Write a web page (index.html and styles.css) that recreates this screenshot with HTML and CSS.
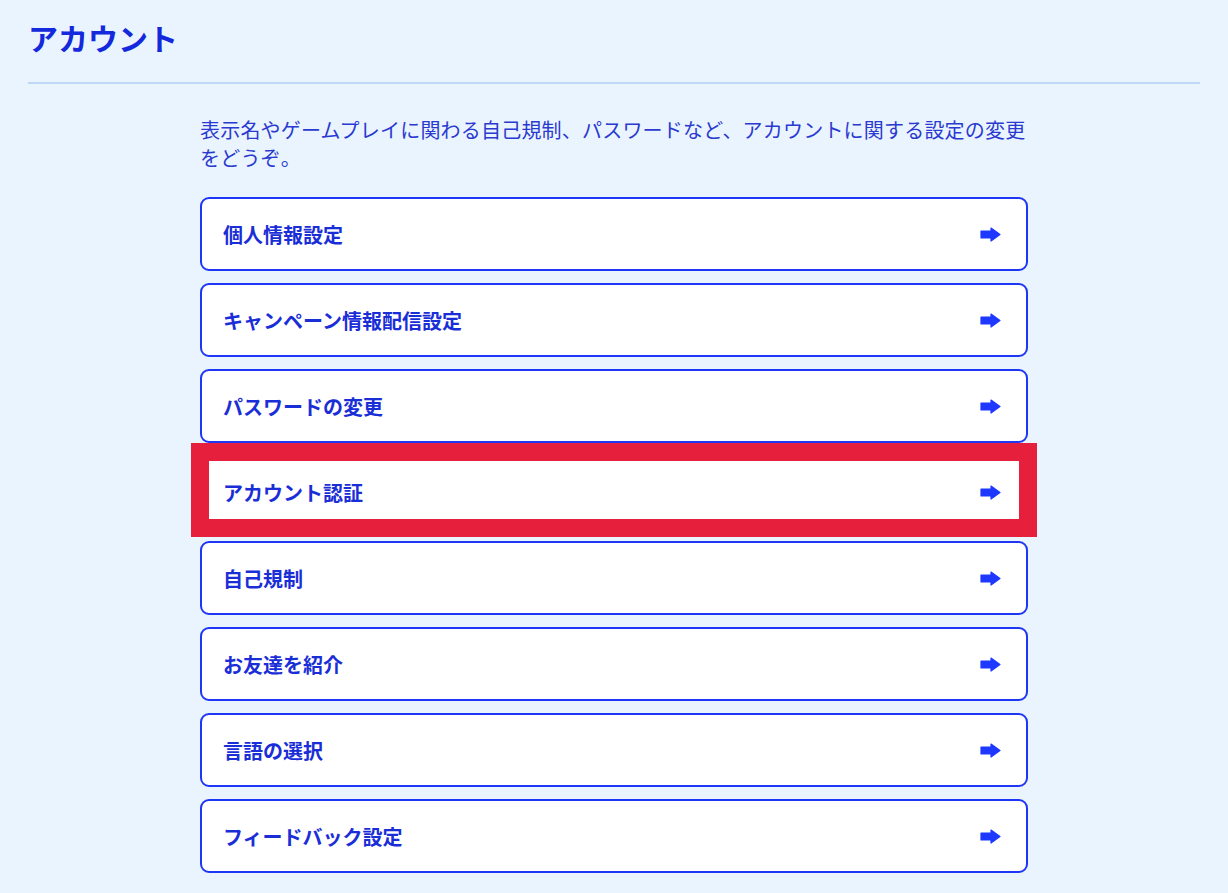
FILE: index.html
```html
<!DOCTYPE html>
<html lang="ja">
<head>
<meta charset="utf-8">
<title>アカウント</title>
<link rel="stylesheet" href="styles.css">
</head>
<body>
<div class="page">
  <h1 class="title">アカウント</h1>
  <div class="divider"></div>
  <div class="content">
    <p class="desc">表示名やゲームプレイに関わる自己規制、パスワードなど、アカウントに関する設定の変更をどうぞ。</p>
    <ul class="menu">
      <li class="item"><span class="label">個人情報設定</span><svg class="arrow" viewBox="0 0 21 15" width="21" height="15"><path d="M1 4 H11 V1 L20 7.5 L11 14 V11 H1 Z"/></svg></li>
      <li class="item"><span class="label">キャンペーン情報配信設定</span><svg class="arrow" viewBox="0 0 21 15" width="21" height="15"><path d="M1 4 H11 V1 L20 7.5 L11 14 V11 H1 Z"/></svg></li>
      <li class="item"><span class="label">パスワードの変更</span><svg class="arrow" viewBox="0 0 21 15" width="21" height="15"><path d="M1 4 H11 V1 L20 7.5 L11 14 V11 H1 Z"/></svg></li>
      <li class="item item-highlight"><span class="label">アカウント認証</span><svg class="arrow" viewBox="0 0 21 15" width="21" height="15"><path d="M1 4 H11 V1 L20 7.5 L11 14 V11 H1 Z"/></svg><span class="highlight"></span></li>
      <li class="item"><span class="label">自己規制</span><svg class="arrow" viewBox="0 0 21 15" width="21" height="15"><path d="M1 4 H11 V1 L20 7.5 L11 14 V11 H1 Z"/></svg></li>
      <li class="item"><span class="label">お友達を紹介</span><svg class="arrow" viewBox="0 0 21 15" width="21" height="15"><path d="M1 4 H11 V1 L20 7.5 L11 14 V11 H1 Z"/></svg></li>
      <li class="item"><span class="label">言語の選択</span><svg class="arrow" viewBox="0 0 21 15" width="21" height="15"><path d="M1 4 H11 V1 L20 7.5 L11 14 V11 H1 Z"/></svg></li>
      <li class="item"><span class="label">フィードバック設定</span><svg class="arrow" viewBox="0 0 21 15" width="21" height="15"><path d="M1 4 H11 V1 L20 7.5 L11 14 V11 H1 Z"/></svg></li>
    </ul>
  </div>
</div>
</body>
</html>
```

FILE: styles.css
```css
html, body {
  margin: 0;
  padding: 0;
  background: #eaf4ff;
  height: 100%;
}
body {
  font-family: "Noto Sans CJK JP", "Noto Sans", sans-serif;
  color: #1f2fd8;
  overflow: hidden;
}
.page {
  padding-top: 17px;
}
.title {
  margin: 0;
  padding: 0 28px;
  font-size: 30px;
  line-height: 40px;
  font-weight: 700;
  color: #1428dc;
}
.divider {
  margin: 25px 28px 0;
  height: 2px;
  background: #bed8f6;
}
.content {
  width: 830px;
  margin-left: 200px;
}
.desc {
  margin: 32px 0 0;
  font-size: 20px;
  line-height: 28px;
  letter-spacing: 0.2px;
  color: #2a3ad0;
}
.menu {
  list-style: none;
  margin: 25px 0 0;
  padding: 0;
  width: 828px;
  display: flex;
  flex-direction: column;
  gap: 12px;
}
.item {
  position: relative;
  box-sizing: border-box;
  height: 74px;
  background: #ffffff;
  border: 2px solid #1e36f5;
  border-radius: 9px;
  display: flex;
  align-items: center;
  justify-content: space-between;
  padding: 0 25px 0 21px;
}
.label {
  font-size: 20px;
  font-weight: 700;
  color: #1a2ed8;
}
.arrow {
  display: block;
  fill: #1e38ff;
  stroke: #1e38ff;
  stroke-width: 1.2;
  stroke-linejoin: round;
}
.highlight {
  position: absolute;
  top: -14px;
  left: -11px;
  right: -11px;
  bottom: -10px;
  border: 18px solid #e61f3d;
  pointer-events: none;
}
```
